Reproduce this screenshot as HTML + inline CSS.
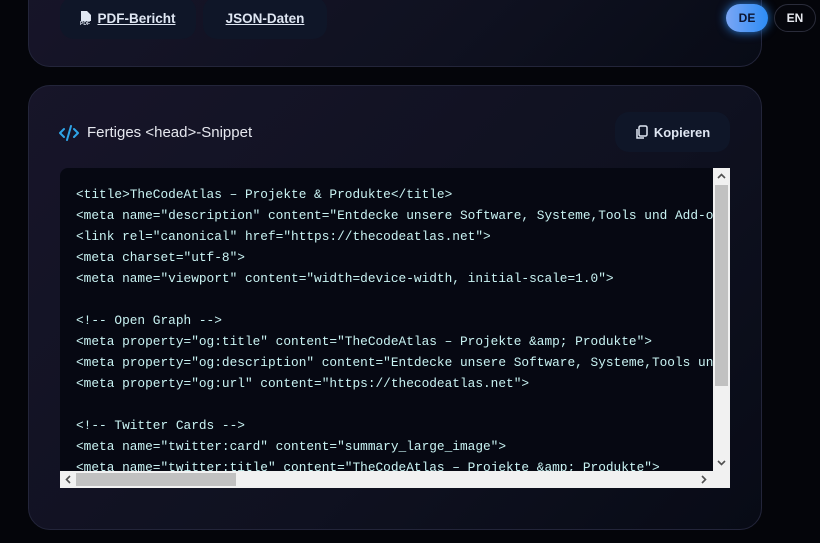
<!DOCTYPE html>
<html><head><meta charset="utf-8"><style>
*{margin:0;padding:0;box-sizing:border-box}
body{width:820px;height:543px;overflow:hidden;background:#04050a;font-family:"Liberation Sans",sans-serif;position:relative}
.card{position:absolute;left:28px;width:734px;border:1px solid #23253a;border-radius:22px;background:linear-gradient(135deg,#171529 0%,#0f1120 60%,#080b16 100%)}
.btn{position:absolute;background:#0f1628;border-radius:14px;color:#dfe6f2;font-weight:bold;font-size:13.5px;display:flex;align-items:center;justify-content:center;white-space:nowrap}
.btn u{text-decoration:underline}
.code{position:absolute;left:31px;top:82px;width:670px;height:320px;background:#060812;border-radius:8px 0 0 0;overflow:hidden}
pre{position:absolute;left:16px;top:16px;font-family:"Liberation Mono",monospace;font-size:12.8px;line-height:21px;color:#c9f3f3;white-space:pre}
.vs{position:absolute;right:0;top:0;width:17px;height:303px;background:#f1f1f1}
.hs{position:absolute;left:0;bottom:0;width:670px;height:17px;background:#f1f1f1}
</style></head><body>
<div class="card" style="top:-30px;height:97px">
 <div class="btn" style="left:31px;top:26px;width:136px;height:42px;gap:5px"><svg width="12" height="14" viewBox="0 0 12 14"><path d="M1 0h6l4 4v6H1z" fill="#dfe6f2"/><text x="0" y="14" font-size="5" fill="#dfe6f2" font-family="Liberation Sans">PDF</text></svg><u>PDF-Bericht</u></div>
 <div class="btn" style="left:174px;top:26px;width:124px;height:42px"><u>JSON-Daten</u></div>
</div>
<div style="position:absolute;left:726px;top:4px;width:42px;height:28px;border-radius:14px;background:linear-gradient(90deg,#7aa6f5,#2d8cf5);box-shadow:0 0 10px #2a7fe0;color:#0b1430;font-weight:bold;font-size:12px;display:flex;align-items:center;justify-content:center">DE</div>
<div style="position:absolute;left:774px;top:4px;width:42px;height:28px;border-radius:14px;border:1px solid #2a2c3a;background:#05060c;color:#e8eaf0;font-weight:bold;font-size:12px;display:flex;align-items:center;justify-content:center">EN</div>
<div class="card" style="top:85px;height:445px">
 <div style="position:absolute;left:30px;top:38px;display:flex;align-items:center;gap:8px;color:#e6e8ef;font-size:15px">
  <svg width="20" height="16" viewBox="0 0 20 16" fill="none" stroke="#2fa4e7" stroke-width="2" stroke-linecap="round" stroke-linejoin="round"><path d="M5 4L1 8l4 4M15 4l4 4-4 4M12 1L8 15"/></svg>Fertiges &lt;head&gt;-Snippet</div>
 <div class="btn" style="left:586px;top:26px;width:115px;height:40px;gap:6px;font-size:13px"><svg width="13" height="15" viewBox="0 0 13 15" fill="none" stroke="#dfe6f2" stroke-width="1.5"><rect x="4" y="1" width="8" height="10" rx="1.5"/><path d="M2 4v9h7"/></svg>Kopieren</div>
 <div class="code">
<pre>&lt;title&gt;TheCodeAtlas – Projekte &amp; Produkte&lt;/title&gt;
&lt;meta name="description" content="Entdecke unsere Software, Systeme,Tools und Add-ons"&gt;
&lt;link rel="canonical" href="https://thecodeatlas.net"&gt;
&lt;meta charset="utf-8"&gt;
&lt;meta name="viewport" content="width=device-width, initial-scale=1.0"&gt;

&lt;!-- Open Graph --&gt;
&lt;meta property="og:title" content="TheCodeAtlas – Projekte &amp;amp; Produkte"&gt;
&lt;meta property="og:description" content="Entdecke unsere Software, Systeme,Tools und Add-ons"&gt;
&lt;meta property="og:url" content="https://thecodeatlas.net"&gt;

&lt;!-- Twitter Cards --&gt;
&lt;meta name="twitter:card" content="summary_large_image"&gt;
&lt;meta name="twitter:title" content="TheCodeAtlas – Projekte &amp;amp; Produkte"&gt;</pre>
  <div class="vs"><div style="position:absolute;left:2px;top:17px;width:13px;height:201px;background:#c1c1c1"></div>
   <svg style="position:absolute;top:5px;left:4px" width="9" height="6" viewBox="0 0 9 6"><path d="M1 5l3.5-3.5L8 5" stroke="#505050" stroke-width="1.6" fill="none"/></svg>
   <svg style="position:absolute;bottom:5px;left:4px" width="9" height="6" viewBox="0 0 9 6"><path d="M1 1l3.5 3.5L8 1" stroke="#505050" stroke-width="1.6" fill="none"/></svg></div>
  <div class="hs"><div style="position:absolute;left:16px;top:2px;width:160px;height:13px;background:#c1c1c1"></div>
   <svg style="position:absolute;left:5px;top:4px" width="6" height="9" viewBox="0 0 6 9"><path d="M5 1L1.5 4.5 5 8" stroke="#505050" stroke-width="1.6" fill="none"/></svg>
   <svg style="position:absolute;left:641px;top:4px" width="6" height="9" viewBox="0 0 6 9"><path d="M1 1l3.5 3.5L1 8" stroke="#505050" stroke-width="1.6" fill="none"/></svg></div>
 </div>
</div>
</body></html>
